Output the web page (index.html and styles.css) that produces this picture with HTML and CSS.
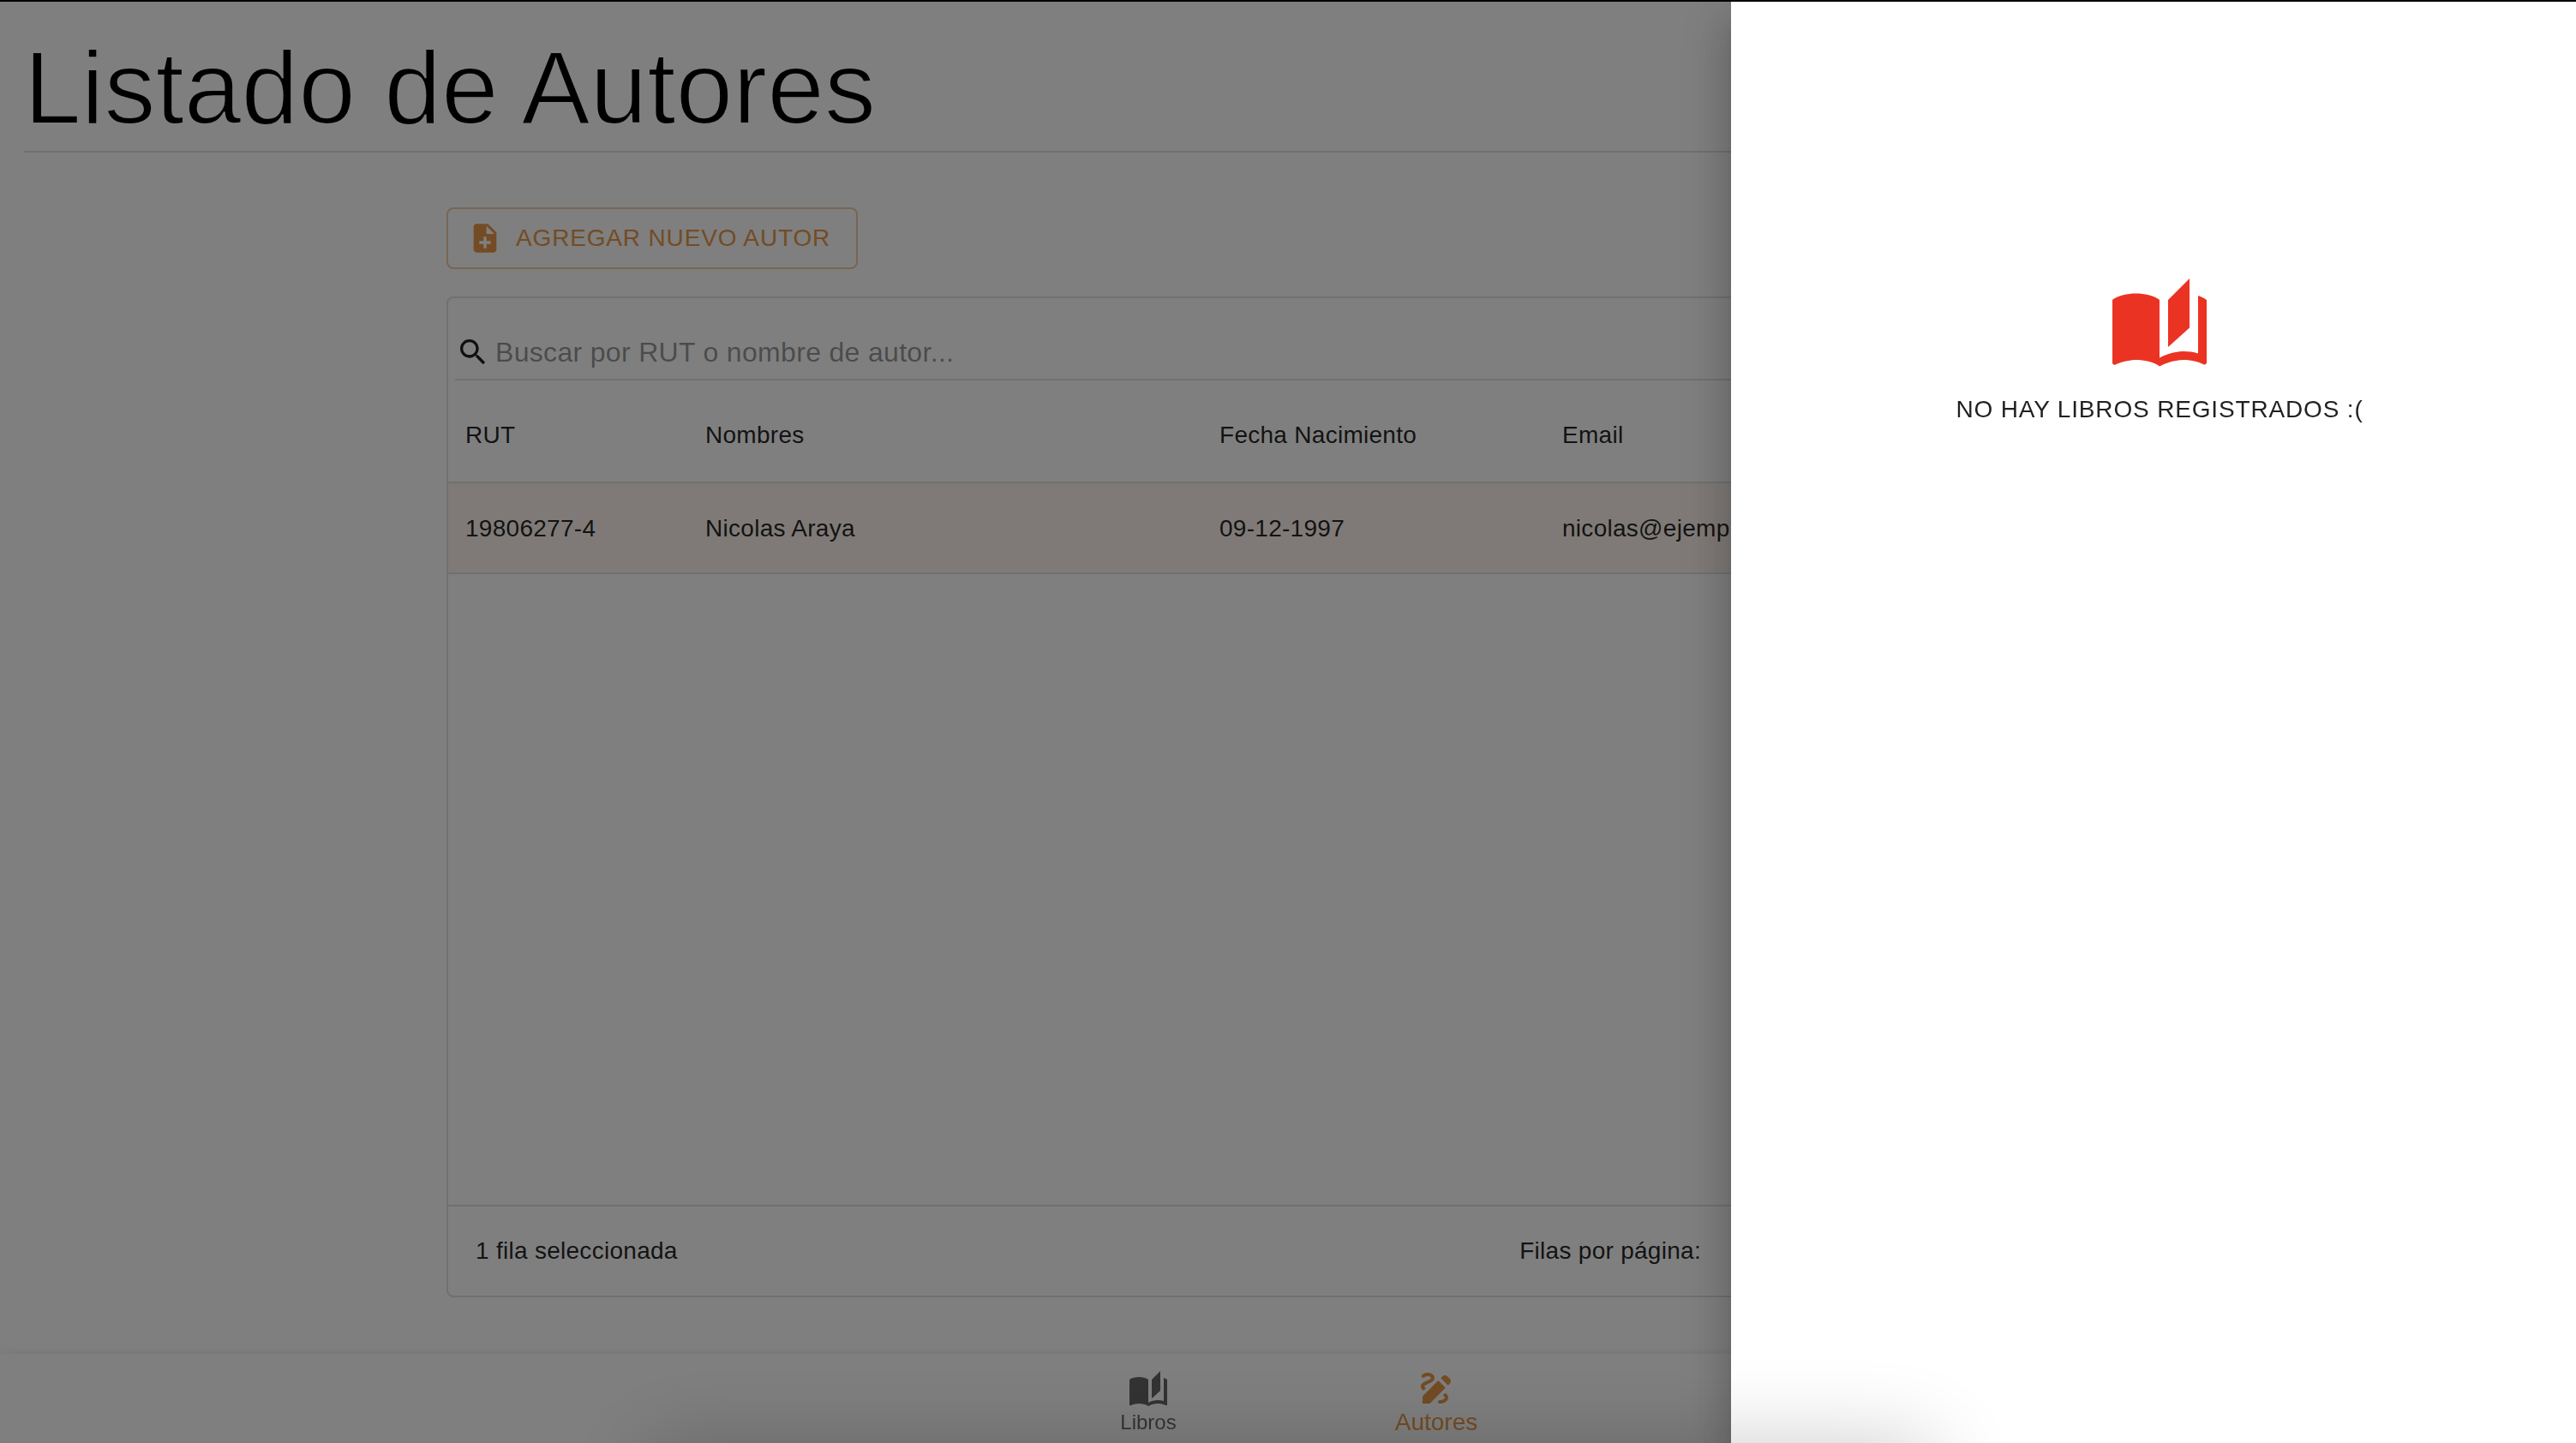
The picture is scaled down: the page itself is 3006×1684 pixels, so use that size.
FILE: index.html
```
<!DOCTYPE html>
<html lang="es">
<head>
  <meta charset="utf-8">
  <meta name="viewport" content="width=device-width, initial-scale=1">
  <title>Listado de Autores</title>
  <link rel="stylesheet" href="styles.css">
</head>
<body>
  <div class="page">
    <header class="page-header">
      <h1 class="page-title">Listado de Autores</h1>
    </header>

    <main class="content">
      <button type="button" class="btn-outlined">
        <svg class="icon-small" viewBox="0 0 24 24" aria-hidden="true"><path d="M14 2H6c-1.100 0-1.990.9-1.990 2L4 20c0 1.100.89 2 1.990 2H18c1.100 0 2-.9 2-2V8l-6-6zm2 14h-3v3h-2v-3H8v-2h3v-3h2v3h3v2zm-3-7V3.500L18.500 9H13z"/></svg>
        AGREGAR NUEVO AUTOR
      </button>

      <section class="grid-box" aria-label="Autores">
        <div class="toolbar">
          <label class="search">
            <svg class="icon-small" viewBox="0 0 24 24" aria-hidden="true"><path d="M15.500 14h-.79l-.28-.27C15.410 12.590 16 11.110 16 9.500 16 5.910 13.090 3 9.500 3S3 5.910 3 9.500 5.910 16 9.500 16c1.610 0 3.090-.59 4.230-1.570l.27.28v.79l5 4.990L20.490 19l-4.990-5zm-6 0C7.010 14 5 11.990 5 9.500S7.010 5 9.500 5 14 7.010 14 9.500 11.990 14 9.500 14z"/></svg>
            <input class="search-input" type="text" placeholder="Buscar por RUT o nombre de autor..." aria-label="Buscar autor">
          </label>
        </div>

        <table class="table">
          <colgroup>
            <col class="col-rut">
            <col class="col-name">
            <col class="col-date">
            <col>
          </colgroup>
          <thead>
            <tr><th>RUT</th><th>Nombres</th><th>Fecha Nacimiento</th><th>Email</th></tr>
          </thead>
          <tbody>
            <tr class="selected"><td>19806277-4</td><td>Nicolas Araya</td><td>09-12-1997</td><td>nicolas@ejemplo.com</td></tr>
          </tbody>
        </table>

        <footer class="grid-footer">
          <span>1 fila seleccionada</span>
          <div class="pagination">
            <label for="page-size">Filas por página:</label>
            <select id="page-size" class="page-size"><option>100</option></select>
            <span class="range">1–1 de 1</span>
            <button type="button" class="pager" aria-label="Página anterior" disabled>‹</button>
            <button type="button" class="pager" aria-label="Página siguiente" disabled>›</button>
          </div>
        </footer>
      </section>
    </main>
  </div>

  <nav class="bottom-nav">
    <a class="nav-item" href="#libros">
      <svg class="icon" viewBox="0 0 24 24" aria-hidden="true"><path d="m19 1-5 5v11l5-4.500V1zM1 6v14.650c0 .25.25.5.5.5.1 0 .15-.05.25-.05C3.100 20.450 5.050 20 6.500 20c1.950 0 4.050.4 5.500 1.500V6c-1.450-1.100-3.550-1.500-5.500-1.500S2.450 4.900 1 6zm22 13.500V6c-.6-.45-1.250-.75-2-1v13.500c-1.100-.35-2.300-.5-3.500-.5-1.700 0-4.150.65-5.500 1.500v2c1.350-.85 3.800-1.500 5.500-1.500 1.650 0 3.350.3 4.750 1.050.1.05.15.05.25.05.25 0 .5-.25.5-.5v-1.100z"/></svg>
      <span>Libros</span>
    </a>
    <a class="nav-item active" href="#autores">
      <svg class="icon" viewBox="0 0 24 24" aria-hidden="true"><path d="m18.850 10.390 1.060-1.060c.78-.78.78-2.050 0-2.830L18.500 5.090c-.78-.78-2.050-.78-2.830 0l-1.060 1.060 4.240 4.240zm-5.660-2.830L4 16.760V21h4.240l9.190-9.190-4.240-4.250zM19 17.500c0 2.190-2.540 3.500-5 3.500-.55 0-1-.45-1-1s.45-1 1-1c1.540 0 3-.73 3-1.500 0-.47-.48-.87-1.230-1.200l1.480-1.480c1.070.63 1.750 1.470 1.750 2.680zM4.580 13.350C3.610 12.790 3 12.060 3 11c0-1.800 1.890-2.630 3.560-3.360C7.590 7.180 9 6.560 9 6c0-.41-.78-1-2-1-1.260 0-1.800.61-1.830.64-.35.41-.98.46-1.400.12-.41-.34-.49-.95-.15-1.380C3.730 4.240 4.760 3 7 3s4 1.320 4 3c0 1.870-1.930 2.720-3.640 3.470C6.420 9.880 5 10.500 5 11c0 .31.43.6 1.070.86l-1.490 1.490z"/></svg>
      <span>Autores</span>
    </a>
  </nav>

  <div class="backdrop"></div>
  <aside class="drawer" role="dialog" aria-label="Libros del autor">
    <svg class="icon-large" viewBox="0 0 24 24" aria-hidden="true"><path d="m19 1-5 5v11l5-4.500V1zM1 6v14.650c0 .25.25.5.5.5.1 0 .15-.05.25-.05C3.100 20.450 5.050 20 6.500 20c1.950 0 4.050.4 5.500 1.500V6c-1.450-1.100-3.550-1.500-5.500-1.500S2.450 4.900 1 6zm22 13.500V6c-.6-.45-1.250-.75-2-1v13.500c-1.100-.35-2.300-.5-3.500-.5-1.700 0-4.150.65-5.500 1.500v2c1.350-.85 3.800-1.500 5.500-1.500 1.650 0 3.350.3 4.750 1.050.1.05.15.05.25.05.25 0 .5-.25.5-.5v-1.100z"/></svg>
    <p class="empty-text">NO HAY LIBROS REGISTRADOS :(</p>
  </aside>
  <div class="top-edge"></div>
  <div class="bottom-shade"></div>
</body>
</html>
```
FILE: styles.css
```
:root {
  --primary: #e6984a;
  --border: #e0e0e0;
  --text: rgba(0, 0, 0, 0.87);
}

* {
  box-sizing: border-box;
}

body {
  margin: 0;
  background: #fff;
  color: var(--text);
  font-family: "Liberation Sans", Arial, Helvetica, sans-serif;
  font-size: 28px;
  line-height: 40px;
}

button,
input,
select {
  font: inherit;
  color: inherit;
}

svg {
  flex: none;
  fill: currentColor;
}

.icon-small {
  width: 40px;
  height: 40px;
}

.icon {
  width: 48px;
  height: 48px;
}

.icon-large {
  width: 120px;
  height: 120px;
  color: #eb3323;
}

.page {
  display: flex;
  flex-direction: column;
  min-height: 100vh;
  padding-bottom: 170px;
}

.page-header {
  margin: 30px 28px 0;
  padding-bottom: 2px;
  border-bottom: 2px solid var(--border);
}

/* The outline in the page colour thins the strokes to a light weight. */
.page-title {
  margin: 0;
  color: #000;
  font-size: 120px;
  font-weight: 300;
  line-height: 144px;
  -webkit-text-stroke: 2px #fff;
}

.content {
  flex: 1;
  display: grid;
  grid-template-columns: 1fr 4fr 1fr;
  grid-template-rows: auto 1fr;
  row-gap: 32px;
  padding: 64px 30px 0;
}

.content > * {
  grid-column: 2;
}

.btn-outlined {
  justify-self: start;
  display: flex;
  align-items: center;
  gap: 16px;
  height: 72px;
  padding: 0 30px 0 23px;
  border: 2px solid rgb(230 152 74 / 50%);
  border-radius: 8px;
  background: none;
  color: var(--primary);
  letter-spacing: 0.03em;
}

.grid-box {
  display: flex;
  flex-direction: column;
  border: 2px solid var(--border);
  border-radius: 8px;
}

.toolbar {
  padding: 32px 8px 8px;
}

.search {
  display: flex;
  align-items: center;
  gap: 6px;
  height: 64px;
  padding-left: 1px;
  border-bottom: 2px solid var(--border);
}

.search-input {
  flex: 1;
  height: 48px;
  padding: 0;
  border: 0;
  outline: 0;
  background: none;
  font-size: 32px;
  letter-spacing: 0.01em;
}

.search-input::placeholder {
  color: rgba(0, 0, 0, 0.42);
}

.table {
  width: 100%;
  table-layout: fixed;
  border-spacing: 0;
}

.table th,
.table td {
  padding: 2px 20px 0;
  border-bottom: 2px solid var(--border);
  font-weight: 400;
  letter-spacing: 0.01em;
  text-align: left;
}

.table th {
  height: 112px;
}

.table td {
  height: 106px;
}

.col-rut {
  width: 280px;
}

.col-name {
  width: 600px;
}

.col-date {
  width: 400px;
}

.selected {
  background: #fff5ee;
}

.grid-footer {
  display: flex;
  align-items: center;
  justify-content: space-between;
  height: 106px;
  margin-top: auto;
  padding-left: 32px;
  border-top: 2px solid var(--border);
  letter-spacing: 0.01em;
}

.pagination {
  display: flex;
  align-items: center;
}

.page-size {
  width: 100px;
  margin: 0 44px 0 54px;
  border: 0;
  background: none;
}

.range {
  width: 140px;
}

.pager {
  width: 80px;
  height: 80px;
  border: 0;
  background: none;
}

.bottom-nav {
  position: fixed;
  inset: auto 0 0;
  display: flex;
  justify-content: center;
  height: 104px;
  padding: 8px 0 0 10px;
  background: #fff;
  box-shadow: 0 6px 6px -4px rgba(0, 0, 0, 0.2), 0 6px 8px rgba(0, 0, 0, 0.14), 0 2px 16px rgba(0, 0, 0, 0.12);
}

.nav-item {
  display: flex;
  flex-direction: column;
  align-items: center;
  justify-content: center;
  width: 336px;
  color: rgba(0, 0, 0, 0.6);
  font-size: 24px;
  line-height: 28px;
  text-decoration: none;
}

.nav-item.active {
  color: var(--primary);
  font-size: 28px;
  line-height: 32px;
}

.backdrop {
  position: fixed;
  inset: 0;
  background: rgba(0, 0, 0, 0.5);
}

.drawer {
  position: fixed;
  inset: 0 0 0 auto;
  display: flex;
  flex-direction: column;
  align-items: center;
  gap: 18px;
  width: calc(100% / 3 - 16px);
  padding: 320px 0 0 14px;
  background: #fff;
  box-shadow: 0 16px 20px -10px rgba(0, 0, 0, 0.2), 0 32px 48px 4px rgba(0, 0, 0, 0.14), 0 12px 60px 10px rgba(0, 0, 0, 0.12);
}

.empty-text {
  margin: 0;
  letter-spacing: 0.03em;
}

.top-edge {
  position: fixed;
  inset: 0 0 auto;
  height: 2px;
  background: #000;
}

/* Soft shade that rises from below the window's lower edge. */
.bottom-shade {
  position: fixed;
  top: 100%;
  left: 25%;
  right: 25%;
  height: 200px;
  border-radius: 20px;
  box-shadow: 0 0 100px rgba(0, 0, 0, 0.2);
}
```
